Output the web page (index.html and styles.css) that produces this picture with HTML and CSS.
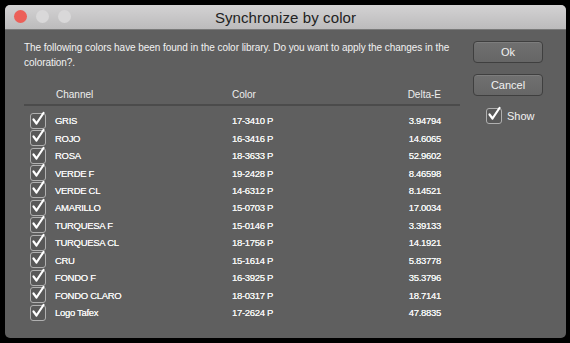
FILE: index.html
```html
<!DOCTYPE html>
<html>
<head>
<meta charset="utf-8">
<link rel="stylesheet" href="styles.css">
</head>
<body>
<div class="window">
  <div class="titlebar">
    <div class="lights">
      <span class="light red"></span>
      <span class="light grey"></span>
      <span class="light grey"></span>
    </div>
    <div class="title">Synchronize by color</div>
  </div>
  <div class="content">
    <div class="main">
      <p class="message">The following colors have been found in the color library. Do you want to apply the changes in the coloration?.</p>
      <div class="thead">
        <span class="c-channel">Channel</span>
        <span class="c-color">Color</span>
        <span class="c-delta">Delta-E</span>
      </div>
      <div class="rows" id="rows"></div>
    </div>
    <div class="side">
      <button class="btn">Ok</button>
      <button class="btn">Cancel</button>
      <label class="show"><span class="cb"><svg viewBox="0 0 16 16" width="16" height="16"><path d="M3.5 8.5 L6.5 12.5 L13.5 2" fill="none" stroke="#fff" stroke-width="2.2" stroke-linecap="round" stroke-linejoin="round"/></svg></span>Show</label>
    </div>
  </div>
</div>
<script>
var data = [
["GRIS","17-3410 P","3.94794"],
["ROJO","16-3416 P","14.6065"],
["ROSA","18-3633 P","52.9602"],
["VERDE F","19-2428 P","8.46598"],
["VERDE CL","14-6312 P","8.14521"],
["AMARILLO","15-0703 P","17.0034"],
["TURQUESA F","15-0146 P","3.39133"],
["TURQUESA CL","18-1756 P","14.1921"],
["CRU","15-1614 P","5.83778"],
["FONDO F","16-3925 P","35.3796"],
["FONDO CLARO","18-0317 P","18.7141"],
["Logo Tafex","17-2624 P","47.8835"]
];
var html = "";
data.forEach(function(r){
  html += '<div class="row"><span class="cb"><svg viewBox="0 0 16 16" width="16" height="16"><path d="M3.5 8.5 L6.5 12.5 L13.5 2" fill="none" stroke="#fff" stroke-width="2.2" stroke-linecap="round" stroke-linejoin="round"/></svg></span><span class="c-channel">' + r[0] + '</span><span class="c-color">' + r[1] + '</span><span class="c-delta">' + r[2] + '</span></div>';
});
document.getElementById("rows").innerHTML = html;
</script>
</body>
</html>
```
FILE: styles.css
```css
html, body {
  margin: 0;
  padding: 0;
  background: #000;
}
body {
  width: 570px;
  height: 343px;
  padding: 5px 4px 0 5px;
  box-sizing: border-box;
  font-family: "Liberation Sans", Arial, sans-serif;
}
.window {
  width: 561px;
  height: 333px;
  background: #5f5f5f;
  border-radius: 5px;
  overflow: hidden;
  display: flex;
  flex-direction: column;
}
.titlebar {
  height: 24px;
  background: linear-gradient(#d3d2d3, #bcbbbc);
  position: relative;
  display: flex;
  align-items: center;
  justify-content: center;
  flex-shrink: 0;
  border-bottom: 1px solid #7a7a7a;
}
.lights {
  position: absolute;
  left: 9px;
  top: 5px;
  display: flex;
  gap: 9px;
}
.light {
  width: 13px;
  height: 13px;
  border-radius: 50%;
  display: block;
}
.light.red { background: #ec5f58; }
.light.grey { background: #d9d8d9; }
.title {
  font-size: 15px;
  color: #222;
  letter-spacing: 0.1px;
}
.content {
  display: flex;
  padding: 10px 0 0 19px;
}
.main {
  width: 436px;
}
.message {
  margin: 0;
  font-size: 10px;
  line-height: 15px;
  color: #f2f2f2;
  letter-spacing: -0.05px;
}
.thead {
  display: flex;
  align-items: center;
  margin-top: 15px;
  height: 19px;
  padding-bottom: 0;
  border-bottom: 2px solid #4b4b4b;
  font-size: 10px;
  color: #eee;
}
.thead .c-channel { margin-left: 32px; width: 176px; }
.thead .c-color { width: 150px; }
.thead .c-delta { width: 59px; text-align: right; }
.rows {
  padding-top: 6px;
}
.row {
  display: flex;
  align-items: center;
  height: 17.45px;
  font-size: 9.5px;
  color: #f4f4f4;
  letter-spacing: -0.3px;
  text-shadow: 0 0 0.4px #fff;
}
.cb {
  width: 14px;
  height: 14px;
  border: 1.5px solid #b0b0b0;
  border-radius: 3px;
  background: #585858;
  display: inline-block;
  position: relative;
  flex-shrink: 0;
}
.cb svg {
  position: absolute;
  left: -1px;
  top: -3px;
}
.row .cb { margin-left: 6px; }
.row .c-channel { margin-left: 9px; width: 177px; }
.row .c-color { width: 130px; }
.row .c-delta { width: 79px; text-align: right; }
.side {
  display: flex;
  flex-direction: column;
  align-items: flex-start;
  margin-left: 13px;
  padding-top: 1px;
}
.btn {
  width: 70px;
  height: 22px;
  margin-bottom: 11px;
  background: linear-gradient(#707070, #666);
  border: 1px solid #3f3f3f;
  border-radius: 4px;
  color: #f2f2f2;
  font-family: "Liberation Sans", Arial, sans-serif;
  font-size: 11px;
  padding: 0;
  box-shadow: inset 0 1px 0 #7d7d7d;
}
.show {
  display: flex;
  align-items: center;
  gap: 5px;
  margin-left: 13px;
  margin-top: 1px;
  font-size: 11px;
  color: #f2f2f2;
}
```
